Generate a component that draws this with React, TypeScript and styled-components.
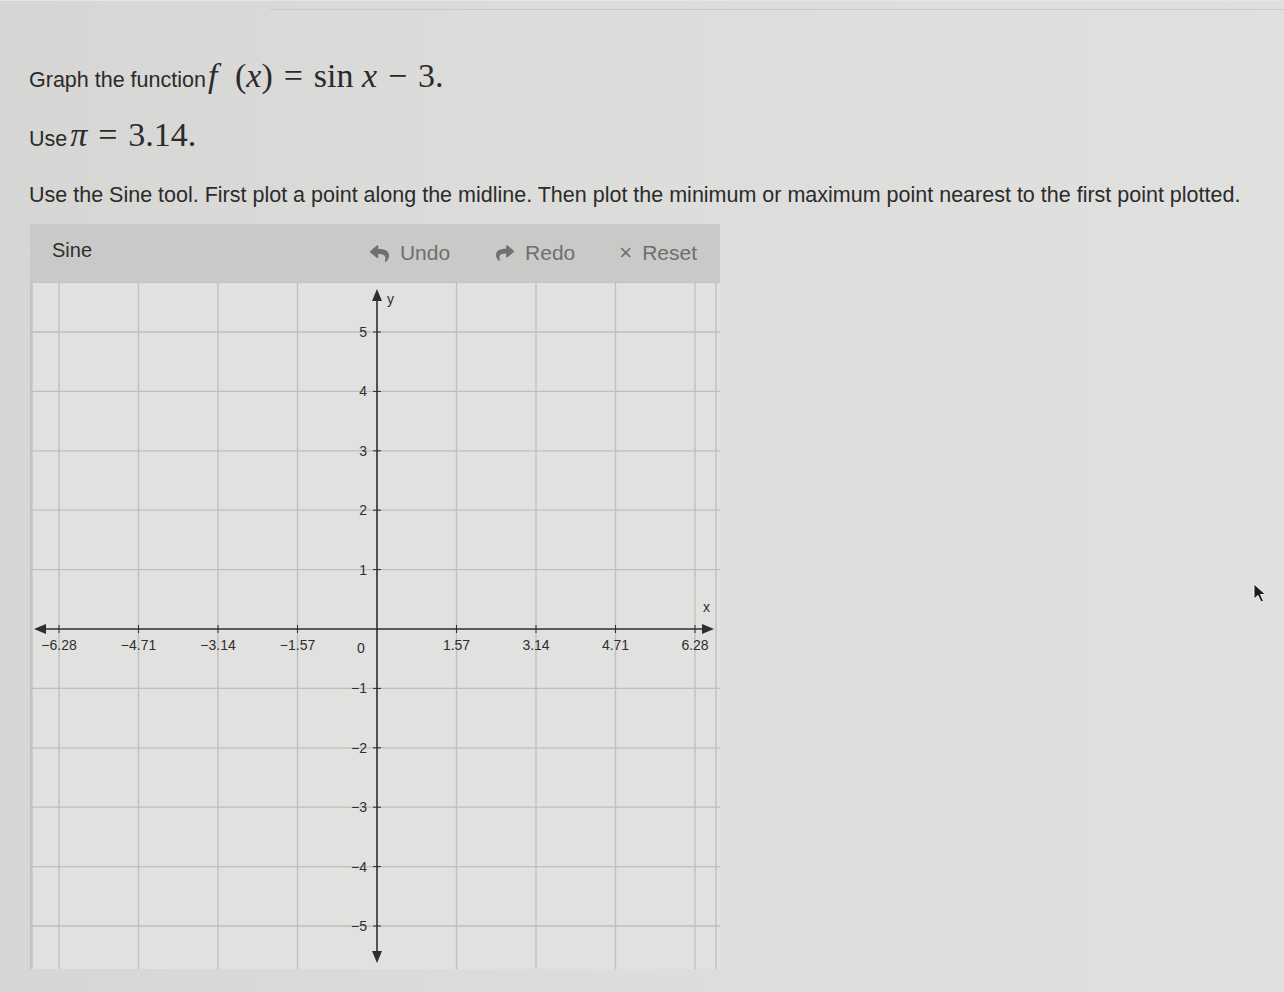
import styled, { createGlobalStyle } from "styled-components";
import { FaReply, FaShare } from "react-icons/fa";

const GlobalStyle = createGlobalStyle`
  html, body {
    margin: 0;
    padding: 0;
    background: #dadad8;
  }
  body {
    font-family: "Liberation Sans", Arial, sans-serif;
    color: #2b2b2b;
  }
`;

const Page = styled.div`
  position: relative;
  width: 1284px;
  height: 992px;
  overflow: hidden;
  background: linear-gradient(90deg, #d6d6d4 0%, #dcdcda 40%, #e0e0de 100%);
  border-top: 1px solid #e6e6e4;
`;

const TopRule = styled.div`
  height: 8px;
  border-bottom: 1px solid #c9c9c7;
  margin-left: 270px;
`;

const Content = styled.div`
  padding: 47px 0 0 29px;
`;

const Line = styled.div<{ $gap?: number }>`
  font-size: 21.5px;
  line-height: 38px;
  margin-top: ${(p) => p.$gap ?? 0}px;
  white-space: nowrap;
`;

const Math = styled.span<{ $ml?: number }>`
  font-family: "Liberation Serif", "Times New Roman", serif;
  font-size: 34px;
  margin-left: ${(p) => p.$ml ?? 0}px;
  color: #2b2b2b;
`;

const I = styled.i`
  font-style: italic;
`;

const Paren = styled.span`
  margin-left: 0.52em;
`;

const Op = styled.span`
  margin: 0 0.32em;
`;

const Panel = styled.div`
  width: 690px;
  margin-top: 10px;
  margin-left: 1px;
`;

const Toolbar = styled.div`
  height: 58px;
  background: #c9c9c7;
  display: flex;
  align-items: center;
  padding: 0 23px 0 22px;
  border-bottom: 1px solid #c2c2c0;
`;

const Title = styled.div`
  font-size: 20px;
  color: #2f2f2f;
  flex: 1;
  margin-top: -6px;
`;

const ToolButton = styled.button<{ $ml?: number }>`
  display: flex;
  align-items: center;
  gap: 11px;
  border: none;
  background: none;
  padding: 0;
  margin-left: ${(p) => p.$ml ?? 0}px;
  font-family: "Liberation Sans", Arial, sans-serif;
  font-size: 21px;
  color: #6e6e6e;
  cursor: pointer;
  svg {
    color: #707070;
  }
`;

const Times = styled.span`
  font-size: 22px;
  margin-right: -1px;
`;

const Chart = styled.svg`
  display: block;
  background: #e1e1df;
`;

const Cursor = styled.svg`
  position: absolute;
  left: 1253px;
  top: 582px;
`;

const X0 = 347;
const DX = 79.5;
const Y0 = 346;
const DY = 59.4;

const xLabels = ["−6.28", "−4.71", "−3.14", "−1.57", "", "1.57", "3.14", "4.71", "6.28"];

export default function App() {
  const cols = [-4, -3, -2, -1, 1, 2, 3, 4];
  const rows = [5, 4, 3, 2, 1, -1, -2, -3, -4, -5];

  return (
    <Page>
      <GlobalStyle />
      <TopRule />
      <Content>
        <Line>
          Graph the function
          <Math $ml={2}>
            <I>f</I>
            <Paren>(</Paren>
            <I>x</I>)<Op>=</Op>sin <I>x</I>
            <Op>−</Op>3.
          </Math>
        </Line>
        <Line $gap={17}>
          Use
          <Math $ml={3}>
            <I>π</I>
            <Op>=</Op>3.14.
          </Math>
        </Line>
        <Line $gap={18}>
          Use the Sine tool. First plot a point along the midline. Then plot the minimum or maximum point nearest to the first point plotted.
        </Line>
        <Panel>
          <Toolbar>
            <Title>Sine</Title>
            <ToolButton>
              <FaReply size={19} />
              Undo
            </ToolButton>
            <ToolButton $ml={46}>
              <FaShare size={18} />
              Redo
            </ToolButton>
            <ToolButton $ml={44}>
              <Times>×</Times>
              Reset
            </ToolButton>
          </Toolbar>
          <Chart width={690} height={686} viewBox="0 0 690 686">
            <g stroke="#bebebc" strokeWidth={1.3}>
              {[...cols, -4.34].map((c) => (
                <line key={"v" + c} x1={X0 + c * DX} y1={0} x2={X0 + c * DX} y2={686} />
              ))}
              <line x1={686} y1={0} x2={686} y2={686} />
              <line x1={0.5} y1={0} x2={0.5} y2={686} />
              {rows.map((r) => (
                <line key={"h" + r} x1={0} y1={Y0 - r * DY} x2={690} y2={Y0 - r * DY} />
              ))}
            </g>
            <g stroke="#2e2e2e" strokeWidth={1.6}>
              <line x1={10} y1={Y0} x2={678} y2={Y0} />
              <line x1={X0} y1={12} x2={X0} y2={674} />
              {cols.map((c) => (
                <line key={"tx" + c} x1={X0 + c * DX} y1={Y0 - 4} x2={X0 + c * DX} y2={Y0 + 4} strokeWidth={1} />
              ))}
              {rows.map((r) => (
                <line key={"ty" + r} x1={X0 - 4} y1={Y0 - r * DY} x2={X0 + 4} y2={Y0 - r * DY} strokeWidth={1} />
              ))}
            </g>
            <g fill="#2e2e2e">
              <polygon points={`4,${Y0} 16,${Y0 - 5} 16,${Y0 + 5}`} />
              <polygon points={`684,${Y0} 672,${Y0 - 5} 672,${Y0 + 5}`} />
              <polygon points={`${X0},6 ${X0 - 5},18 ${X0 + 5},18`} />
              <polygon points={`${X0},680 ${X0 - 5},668 ${X0 + 5},668`} />
            </g>
            <g fontFamily="'Liberation Sans', Arial, sans-serif" fontSize={14} fill="#2e2e2e">
              {xLabels.map((t, i) =>
                t ? (
                  <text key={t} x={X0 + (i - 4) * DX} y={Y0 + 21} textAnchor="middle">
                    {t}
                  </text>
                ) : null
              )}
              <text x={X0 - 16} y={Y0 + 24} textAnchor="middle">0</text>
              {rows.map((r) => (
                <text key={"ly" + r} x={X0 - 10} y={Y0 - r * DY + 5} textAnchor="end">
                  {r < 0 ? `−${-r}` : r}
                </text>
              ))}
              <text x={357} y={21}>y</text>
              <text x={673} y={329}>x</text>
            </g>
          </Chart>
        </Panel>
      </Content>
      <Cursor width={16} height={22} viewBox="0 0 16 22">
        <path d="M1 1 L1 16 L5 12.5 L8 19 L10.5 18 L7.5 11.5 L12.5 11.5 Z" fill="#1c1c1c" stroke="#f0f0f0" strokeWidth={1} />
      </Cursor>
    </Page>
  );
}
